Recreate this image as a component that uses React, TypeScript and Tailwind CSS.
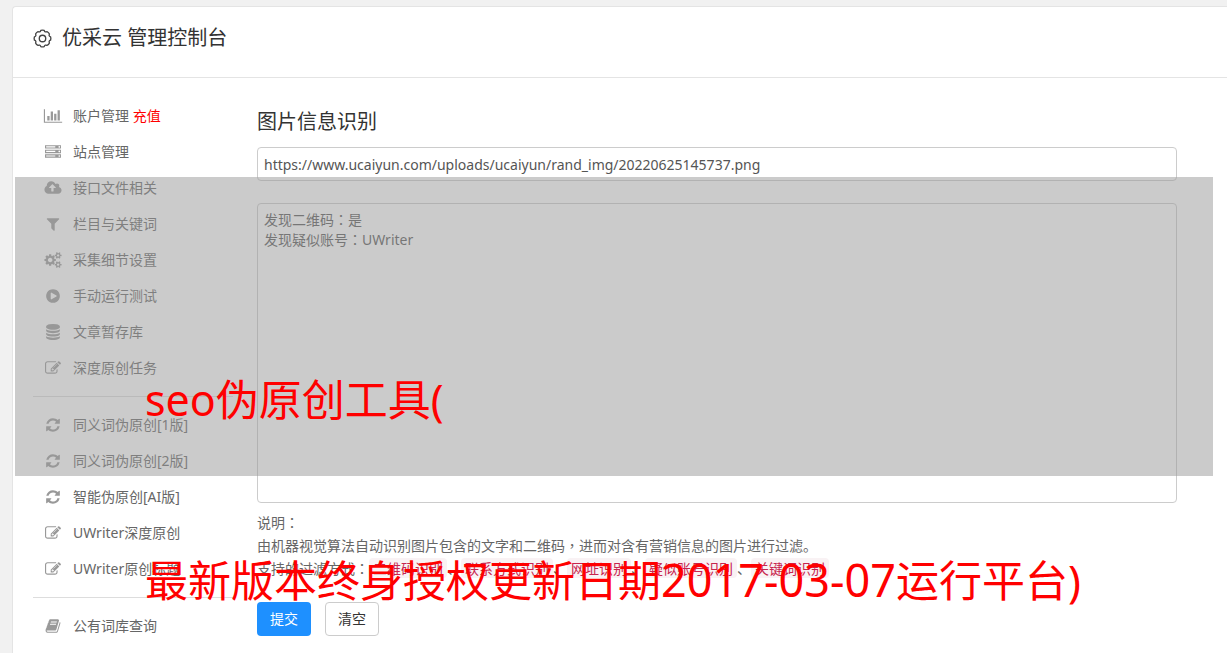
import { useState } from "react";

type IconShape = {
  viewBox: string;
  d: string;
};

const ICONS = {
  chart: {
    viewBox: "0 0 2048 1792",
    d: "M640 896v512h-256v-512h256zm384-512v1024h-256v-1024h256zm1024 1152v128h-2048v-1536h128v1408h1920zm-640-896v768h-256v-768h256zm384-384v1152h-256v-1152h256z",
  },
  server: {
    viewBox: "0 0 1792 1792",
    d: "M128 1408h1024v-128h-1024v128zm0-512h1024v-128h-1024v128zm1568 448q0-40-28-68t-68-28-68 28-28 68 28 68 68 28 68-28 28-68zm-1568-960h1024v-128h-1024v128zm1568 448q0-40-28-68t-68-28-68 28-28 68 28 68 68 28 68-28 28-68zm0-512q0-40-28-68t-68-28-68 28-28 68 28 68 68 28 68-28 28-68zm96 832v384h-1792v-384h1792zm0-512v384h-1792v-384h1792zm0-512v384h-1792v-384h1792z",
  },
  upload: {
    viewBox: "0 0 1920 1792",
    d: "M1280 864q0-14-9-23l-352-352q-9-9-23-9t-23 9l-351 351q-10 12-10 24 0 14 9 23t23 9h224v352q0 13 9.5 22.5t22.5 9.5h192q13 0 22.5-9.5t9.5-22.5v-352h224q13 0 22.5-9.5t9.5-22.5zm640 288q0 159-112.5 271.5t-271.5 112.5h-1088q-185 0-316.5-131.5t-131.5-316.5q0-130 70-240t188-165q-2-30-2-43 0-212 150-362t362-150q156 0 285.5 87t188.5 231q71-62 166-62 106 0 181 75t75 181q0 76-41 138 130 31 213.5 135.5t83.5 238.5z",
  },
  filter: {
    viewBox: "0 0 1792 1792",
    d: "M1595 295q17 41-14 70l-493 493v742q0 42-39 59-13 5-25 5-27 0-45-19l-256-256q-19-19-19-45v-486l-493-493q-31-29-14-70 17-39 59-39h1280q42 0 59 39z",
  },
  cogs: {
    viewBox: "0 0 1920 1792",
    d: "M896 896q0-106-75-181t-181-75-181 75-75 181 75 181 181 75 181-75 75-181zm768 512q0-52-38-90t-90-38-90 38-38 90q0 53 37.5 90.5t90.5 37.5 90.5-37.5 37.5-90.5zm0-1024q0-52-38-90t-90-38-90 38-38 90q0 53 37.5 90.5t90.5 37.5 90.5-37.5 37.5-90.5zm-384 421v185q0 10-7 19.5t-16 10.5l-155 24q-11 35-32 76 34 48 90 115 7 11 7 20 0 12-7 19-23 30-82.5 89.5t-78.5 59.5q-11 0-21-7l-115-90q-37 19-77 31-11 108-23 155-7 24-30 24h-186q-11 0-20-7.5t-10-17.5l-23-153q-34-10-75-31l-118 89q-7 7-20 7-11 0-21-8-144-133-144-160 0-9 7-19 10-14 41-53t47-61q-23-44-35-82l-152-24q-10-1-17-9.5t-7-19.5v-185q0-10 7-19.5t16-10.5l155-24q11-35 32-76-34-48-90-115-7-11-7-20 0-12 7-20 22-30 82-89t79-59q11 0 21 7l115 90q34-18 77-32 11-108 23-154 7-24 30-24h186q11 0 20 7.5t10 17.5l23 153q34 10 75 31l118-89q8-7 20-7 11 0 21 8 144 133 144 160 0 8-7 19-12 16-42 54t-45 60q23 48 34 82l152 23q10 2 17 10.5t7 19.5zm640 533v140q0 16-149 31-12 27-30 52 51 113 51 138 0 4-4 7-122 71-124 71-8 0-46-47t-52-68q-20 2-30 2t-30-2q-14 21-52 68t-46 47q-2 0-124-71-4-3-4-7 0-25 51-138-18-25-30-52-149-15-149-31v-140q0-16 149-31 13-29 30-52-51-113-51-138 0-4 4-7 4-2 35-20t59-34 30-16q8 0 46 46.5t52 67.5q20-2 30-2t30 2q51-71 92-112l6-2q4 0 124 70 4 3 4 7 0 25-51 138 17 23 30 52 149 15 149 31zm0-1024v140q0 16-149 31-12 27-30 52 51 113 51 138 0 4-4 7-122 71-124 71-8 0-46-47t-52-68q-20 2-30 2t-30-2q-14 21-52 68t-46 47q-2 0-124-71-4-3-4-7 0-25 51-138-18-25-30-52-149-15-149-31v-140q0-16 149-31 13-29 30-52-51-113-51-138 0-4 4-7 4-2 35-20t59-34 30-16q8 0 46 46.5t52 67.5q20-2 30-2t30 2q51-71 92-112l6-2q4 0 124 70 4 3 4 7 0 25-51 138 17 23 30 52 149 15 149 31z",
  },
  play: {
    viewBox: "0 0 1792 1792",
    d: "M896 128q209 0 385.5 103t279.5 279.5 103 385.5-103 385.5-279.5 279.5-385.5 103-385.5-103-279.5-279.5-103-385.5 103-385.5 279.5-279.5 385.5-103zm384 823q32-18 32-55t-32-55l-544-320q-31-19-64-1-32 19-32 56v640q0 37 32 56 16 8 32 8 17 0 32-9z",
  },
  database: {
    viewBox: "0 0 1792 1792",
    d: "M896 768q237 0 443-43t325-127v170q0 69-103 128t-280 93.5-385 34.5-385-34.5-280-93.5-103-128v-170q119 84 325 127t443 43zm0 768q237 0 443-43t325-127v170q0 69-103 128t-280 93.5-385 34.5-385-34.5-280-93.5-103-128v-170q119 84 325 127t443 43zm0-384q237 0 443-43t325-127v170q0 69-103 128t-280 93.5-385 34.5-385-34.5-280-93.5-103-128v-170q119 84 325 127t443 43zm0-1152q208 0 385 34.5t280 93.5 103 128v128q0 69-103 128t-280 93.5-385 34.5-385-34.5-280-93.5-103-128v-128q0-69 103-128t280-93.5 385-34.5z",
  },
  edit: {
    viewBox: "0 0 1792 1792",
    d: "M888 1184l116-116-152-152-116 116v56h96v96h56zm440-720q-16-16-33 1l-350 350q-17 17-1 33t33-1l350-350q17-17 1-33zm80 594v190q0 119-84.5 203.5t-203.5 84.5h-832q-119 0-203.5-84.5t-84.5-203.5v-832q0-119 84.5-203.5t203.5-84.5h832q63 0 117 25 15 7 18 23 3 17-9 29l-49 49q-14 14-32 8-23-6-45-6h-832q-66 0-113 47t-47 113v832q0 66 47 113t113 47h832q66 0 113-47t47-113v-126q0-13 9-22l64-64q15-15 35-7t20 29zm-96-738l288 288-672 672h-288v-288zm444 132l-92 92-288-288 92-92q28-28 68-28t68 28l152 152q28 28 28 68t-28 68z",
  },
  refresh: {
    viewBox: "0 0 1792 1792",
    d: "M1639 1056q0 5-1 7-64 268-268 434.5t-478 166.5q-146 0-282.5-55t-243.5-157l-129 129q-19 19-45 19t-45-19-19-45v-448q0-26 19-45t45-19h448q26 0 45 19t19 45-19 45l-137 137q71 66 161 102t187 36q134 0 250-65t186-179q11-17 53-117 8-23 30-23h192q13 0 22.5 9.5t9.5 22.5zm25-800v448q0 26-19 45t-45 19h-448q-26 0-45-19t-19-45 19-45l138-138q-148-137-349-137-134 0-250 65t-186 179q-11 17-53 117-8 23-30 23h-199q-13 0-22.5-9.5t-9.5-22.5v-7q65-268 270-434.5t480-166.5q146 0 284 55.5t245 156.5l130-129q19-19 45-19t45 19 19 45z",
  },
  book: {
    viewBox: "0 0 1792 1792",
    d: "M1703 478q40 57 18 129l-275 906q-19 64-76.5 107.5t-122.5 43.5h-923q-77 0-148.5-53.5t-99.5-131.5q-24-67-2-127 0-4 3-27t4-37q1-8-3-21.5t-3-19.5q2-11 8-21t16.5-23.5 16.5-23.5q23-38 45-91.5t30-91.5q3-10 .5-30t-.5-28q3-11 17-28t17-23q21-36 42-92t25-90q1-9-2.5-32t.5-28q4-13 22-30.5t22-22.5q19-26 42.5-84.5t27.5-96.5q1-8-3-25.5t-2-26.5q2-8 9-18t18-23 17-21q8-12 16.5-30.5t15-35 16-36 19.5-32 26.5-23.5 36-11.5 47.5 5.5l-1 3q38-9 51-9h761q74 0 114 56t18 130l-274 906q-36 119-71.5 153.5t-128.5 34.5h-869q-27 0-38 15-11 16-1 43 24 70 144 70h923q29 0 56-15.5t35-41.5l300-987q7-22 5-57 38 15 59 43zm-1064 2q-4 13 2 22.5t20 9.5h608q13 0 25.5-9.5t16.5-22.5l21-64q4-13-2-22.5t-20-9.5h-608q-13 0-25.5 9.5t-16.5 22.5zm-83 256q-4 13 2 22.5t20 9.5h608q13 0 25.5-9.5t16.5-22.5l21-64q4-13-2-22.5t-20-9.5h-608q-13 0-25.5 9.5t-16.5 22.5z",
  },
} satisfies Record<string, IconShape>;

type MenuItem = {
  icon: keyof typeof ICONS;
  label: string;
  badge?: string;
};

const MENU: MenuItem[][] = [
  [
    { icon: "chart", label: "账户管理", badge: "充值" },
    { icon: "server", label: "站点管理" },
    { icon: "upload", label: "接口文件相关" },
    { icon: "filter", label: "栏目与关键词" },
    { icon: "cogs", label: "采集细节设置" },
    { icon: "play", label: "手动运行测试" },
    { icon: "database", label: "文章暂存库" },
    { icon: "edit", label: "深度原创任务" },
  ],
  [
    { icon: "refresh", label: "同义词伪原创[1版]" },
    { icon: "refresh", label: "同义词伪原创[2版]" },
    { icon: "refresh", label: "智能伪原创[AI版]" },
    { icon: "edit", label: "UWriter深度原创" },
    { icon: "edit", label: "UWriter原创标题" },
  ],
  [{ icon: "book", label: "公有词库查询" }],
];

const FILTERS = [
  "二维码识别",
  "联系方式识别",
  "网址识别",
  "疑似账号识别",
  "关键词识别",
];

function MenuIcon({ name }: { name: keyof typeof ICONS }) {
  const { viewBox, d } = ICONS[name];
  return (
    <svg viewBox={viewBox} className="h-4 w-5 shrink-0 fill-[#999]" aria-hidden>
      <path d={d} />
    </svg>
  );
}

function GearIcon() {
  return (
    <svg
      viewBox="0 0 20 20"
      className="size-[19px] fill-none stroke-[#444]"
      strokeWidth="1.4"
      strokeLinejoin="round"
      aria-hidden
    >
      <path d="M11.8 1.500Q12.600 3.800 14.700 2.700Q16.500 3.500 17.300 5.300Q16.200 7.400 18.500 8.200Q19.100 10 18.500 11.800Q16.200 12.600 17.300 14.700Q16.500 16.500 14.700 17.300Q12.600 16.200 11.800 18.500Q10 19.100 8.200 18.500Q7.400 16.200 5.300 17.300Q3.500 16.500 2.700 14.700Q3.800 12.600 1.500 11.800Q.9 10 1.500 8.200Q3.800 7.400 2.700 5.300Q3.500 3.500 5.300 2.700Q7.400 3.800 8.200 1.500Q10 .9 11.800 1.500z" />
      <circle cx="10" cy="10" r="3.400" />
    </svg>
  );
}

function Sidebar() {
  return (
    <nav className="w-[200px] shrink-0 pt-5">
      {MENU.map((group, i) => (
        <ul key={i} className={i > 0 ? "mt-2.5 border-t border-[#ddd] pt-2.5" : ""}>
          {group.map((item) => (
            <li key={item.label}>
              <a
                href="#"
                className="flex h-9 items-center gap-2.5 pl-2.5 text-sm whitespace-nowrap text-[#666]"
              >
                <MenuIcon name={item.icon} />
                <span>
                  {item.label}
                  {item.badge && <span className="text-[#f00]"> {item.badge}</span>}
                </span>
              </a>
            </li>
          ))}
        </ul>
      ))}
    </nav>
  );
}

// Colons and commas sit in the middle of their square in this face
function Mark({ children }: { children: string }) {
  return <span className="font-['Noto_Sans_CJK_TC',sans-serif]">{children}</span>;
}

function ImageCheckForm() {
  const [url, setUrl] = useState(
    "https://www.ucaiyun.com/uploads/ucaiyun/rand_img/20220625145737.png",
  );
  const [result, setResult] = useState("发现二维码：是\n发现疑似账号：UWriter");

  const clear = () => {
    setUrl("");
    setResult("");
  };

  return (
    <form
      className="mr-[50px] ml-6 flex-1 pt-7"
      onSubmit={(e) => e.preventDefault()}
    >
      <h2 className="text-xl leading-8 text-[#333]">图片信息识别</h2>
      <input
        type="text"
        aria-label="图片地址"
        value={url}
        onChange={(e) => setUrl(e.target.value)}
        className="mt-[9px] block h-[34px] w-full rounded border border-[#ccc] bg-white px-1.5 text-sm text-[#555]"
      />
      <textarea
        aria-label="识别结果"
        value={result}
        onChange={(e) => setResult(e.target.value)}
        className="mt-[22px] block h-[300px] w-full resize-none rounded border border-[#ccc] bg-white px-1.5 py-1.5 font-['Noto_Sans','Noto_Sans_CJK_TC',sans-serif] text-sm leading-5 text-[#555]"
      />
      <div className="mt-2 text-sm leading-[23px] text-[#666]">
        <p>
          说明<Mark>：</Mark>
        </p>
        <p>
          由机器视觉算法自动识别图片包含的文字和二维码<Mark>，</Mark>
          进而对含有营销信息的图片进行过滤。
        </p>
        <p>
          支持的过滤方式<Mark>：</Mark>
          {FILTERS.map((name, i) => (
            <span key={name}>
              {i > 0 && "、"}
              <code className="rounded bg-[#f9f2f4] px-1 font-['Noto_Sans_CJK_SC',sans-serif] text-[#c7254e]">
                {name}
              </code>
            </span>
          ))}
        </p>
      </div>
      <div className="mt-[22px] flex gap-3.5">
        <button
          type="submit"
          className="h-[34px] rounded bg-[#1e90ff] px-[13px] text-sm text-white"
        >
          提交
        </button>
        <button
          type="button"
          onClick={clear}
          className="h-[34px] rounded border border-[#ccc] bg-white px-3 text-sm text-[#333]"
        >
          清空
        </button>
      </div>
    </form>
  );
}

// Grey band with the two-line headline laid over the console
function HeadlineOverlay() {
  return (
    <div className="pointer-events-none absolute top-[177px] right-3.5 left-[15px] h-[299px] bg-[#979797]/50">
      <div className="absolute top-[133px] left-[130px] text-[43px] leading-[180px] whitespace-nowrap text-[#f00]">
        <p>seo伪原创工具(</p>
        <p>
          最新版本终身授权更新日期<span className="text-[45px]">2017-03-07</span>
          运行平台)
        </p>
      </div>
    </div>
  );
}

export default function App() {
  return (
    <div className="relative h-screen overflow-hidden bg-[#f1f1f1] pt-1.5 pl-3 font-['Noto_Sans','Noto_Sans_CJK_SC',sans-serif]">
      <main className="min-h-full rounded-tl border-t border-l border-[#e4e4e4] bg-white">
        <header className="flex h-[71px] items-center gap-2.5 border-b border-[#e4e4e4] pb-2 pl-5">
          <GearIcon />
          <h1 className="text-xl text-[#333]">优采云 管理控制台</h1>
        </header>
        <div className="flex pl-5">
          <Sidebar />
          <ImageCheckForm />
        </div>
      </main>
      <HeadlineOverlay />
    </div>
  );
}
